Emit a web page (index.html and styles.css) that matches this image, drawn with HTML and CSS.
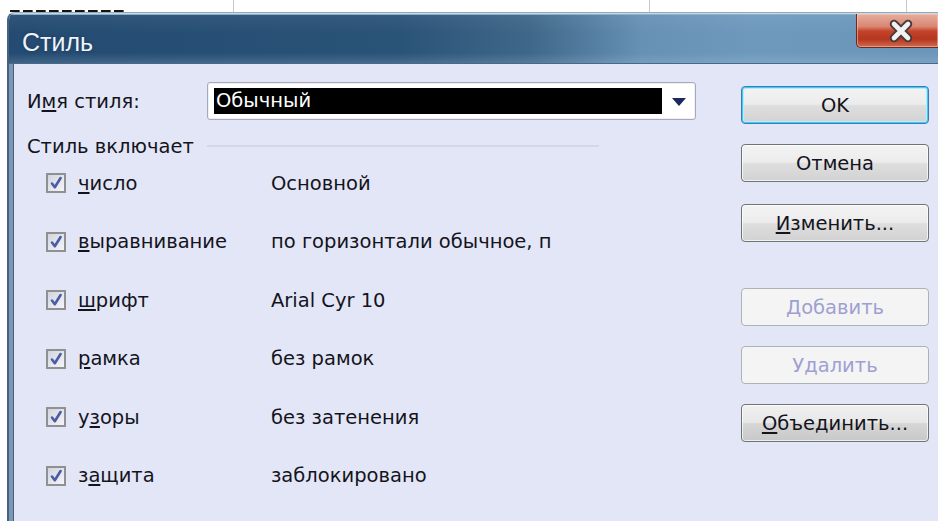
FILE: index.html
```html
<!DOCTYPE html>
<html lang="ru">
<head>
<meta charset="utf-8">
<title>Стиль</title>
<link rel="stylesheet" href="styles.css">
</head>
<body>
<svg class="defs" width="0" height="0" aria-hidden="true">
  <defs>
    <linearGradient id="cbFill" x1="0" y1="0" x2="1" y2="1">
      <stop offset="0" stop-color="#cfd3dc"/>
      <stop offset="1" stop-color="#f7f7f9"/>
    </linearGradient>
    <symbol id="cb" viewBox="0 0 20 20">
      <rect x="1" y="1" width="18" height="18" fill="url(#cbFill)" stroke="#8e9091" stroke-width="2"/>
      <path d="M6 10.5 L8.8 14.2 L14.6 5" fill="none" stroke="#4a5ca6" stroke-width="2.6" stroke-linecap="round" stroke-linejoin="round"/>
    </symbol>
  </defs>
</svg>

<div class="desk"></div>

<div class="dialog">
  <div class="titlebar">
    <span class="title">Стиль</span>
    <button class="close" type="button" aria-label="Закрыть">
      <svg width="30" height="24" viewBox="0 0 30 24">
        <path d="M8 5 L22 19 M22 5 L8 19" stroke="#4a3a3a" stroke-width="8.5" stroke-linecap="round"/>
        <path d="M8 5 L22 19 M22 5 L8 19" stroke="#f2f2f2" stroke-width="4.6" stroke-linecap="round"/>
      </svg>
    </button>
  </div>

  <div class="body">
    <div class="main">
      <div class="name-row">
        <span class="name-label">И<u>м</u>я стиля:</span>
        <div class="combo">
          <span class="combo-value">Обычный</span>
          <span class="combo-arrow">
            <svg width="14" height="8" viewBox="0 0 14 8"><path d="M0 0 H14 L7 8 Z" fill="#1b2a5c"/></svg>
          </span>
        </div>
      </div>

      <div class="group-head">
        <span>Стиль включает</span>
        <span class="rule"></span>
      </div>

      <ul class="items">
        <li class="item">
          <svg class="cb"><use href="#cb"/></svg>
          <span class="item-name"><u>ч</u>исло</span>
          <span class="item-value">Основной</span>
        </li>
        <li class="item">
          <svg class="cb"><use href="#cb"/></svg>
          <span class="item-name"><u>в</u>ыравнивание</span>
          <span class="item-value">по горизонтали обычное, п</span>
        </li>
        <li class="item">
          <svg class="cb"><use href="#cb"/></svg>
          <span class="item-name"><u>ш</u>рифт</span>
          <span class="item-value">Arial Cyr 10</span>
        </li>
        <li class="item">
          <svg class="cb"><use href="#cb"/></svg>
          <span class="item-name"><u>р</u>амка</span>
          <span class="item-value">без рамок</span>
        </li>
        <li class="item">
          <svg class="cb"><use href="#cb"/></svg>
          <span class="item-name">у<u>з</u>оры</span>
          <span class="item-value">без затенения</span>
        </li>
        <li class="item">
          <svg class="cb"><use href="#cb"/></svg>
          <span class="item-name">з<u>а</u>щита</span>
          <span class="item-value">заблокировано</span>
        </li>
      </ul>
    </div>

    <div class="actions">
      <button class="btn btn-default" type="button">OK</button>
      <button class="btn" type="button">Отмена</button>
      <button class="btn btn-edit" type="button"><u>И</u>зменить...</button>
      <button class="btn btn-add" type="button" disabled>Добавить</button>
      <button class="btn" type="button" disabled>Удалить</button>
      <button class="btn btn-merge" type="button"><u>О</u>бъединить...</button>
    </div>
  </div>
</div>
</body>
</html>
```

FILE: styles.css
```css
html, body {
  margin: 0;
  height: 100%;
  overflow: hidden;
  background: #ffffff;
}

body {
  font-family: "DejaVu Sans", "Noto Sans", sans-serif;
  font-size: 19.5px;
  color: #14141c;
}

.defs {
  position: absolute;
  width: 0;
  height: 0;
}

u {
  text-decoration-thickness: 2px;
  text-underline-offset: 2px;
}

/* sheet strip behind the dialog: grid lines and the tail of a cell */
.desk {
  height: 12px;
  background:
    repeating-linear-gradient(90deg, #141414 0 9px, #6b6b3c 9px 10px, transparent 10px 13px) 10px 10px / 117px 2px no-repeat,
    linear-gradient(#c9c9c9, #c9c9c9) 233px 0 / 1px 12px no-repeat,
    linear-gradient(#c9c9c9, #c9c9c9) 649px 0 / 1px 12px no-repeat,
    linear-gradient(#c9c9c9, #c9c9c9) 906px 0 / 1px 12px no-repeat,
    #ffffff;
}

.dialog {
  margin-left: 7px;
  height: 509px;
  display: flex;
  flex-direction: column;
  border-left: 2px solid #46627f;
  border-top: 1px solid #9aa7b5;
  border-top-left-radius: 8px;
  overflow: hidden;
}

.titlebar {
  flex: none;
  height: 50px;
  display: flex;
  align-items: flex-start;
  border-bottom: 1px solid #4a6887;
  box-shadow: inset 0 1px 0 #c5d9ec, inset 0 2px 0 #8fb0cd;
  background:
    linear-gradient(180deg, rgba(255, 255, 255, 0.06) 0%, rgba(255, 255, 255, 0) 40%, rgba(255, 255, 255, 0) 80%, rgba(190, 215, 235, 0.18) 100%),
    linear-gradient(90deg, #244b71 0%, #2a5378 42%, #3e6789 56%, #6690b4 68%, #6e99bd 80%, #6b96ba 100%);
}

.title {
  padding: 15px 0 0 13px;
  font-family: "Liberation Sans", Arial, sans-serif;
  font-size: 25px;
  line-height: 28px;
  color: #eef3f8;
  text-shadow: 0 0 3px rgba(20, 40, 70, 0.6);
}

.close {
  margin: 1px 0 0 auto;
  width: 82px;
  height: 34px;
  padding: 0 0 0 6px;
  display: flex;
  align-items: center;
  justify-content: center;
  border: 1px solid #6b2a1c;
  border-right: none;
  border-top: none;
  border-radius: 0 0 0 5px;
  background: linear-gradient(180deg, #e6ae9e 0%, #d98672 38%, #c4432a 52%, #b5371f 76%, #d06a50 100%);
  box-shadow: inset 0 0 0 1px rgba(255, 210, 195, 0.5);
}

.body {
  flex: 1;
  display: flex;
  background: #e3e6f7;
  border-left: 4px solid #7c98b4;
  box-shadow: inset 1px 0 0 #44607e;
}

.main {
  flex: 1;
  min-width: 0;
  padding: 18px 0 0 14px;
}

.name-row {
  display: flex;
  align-items: center;
  height: 38px;
}

.name-label {
  width: 180px;
}

.combo {
  box-sizing: border-box;
  width: 489px;
  height: 38px;
  display: flex;
  align-items: center;
  padding-left: 6px;
  border: 1px solid #a7aab3;
  border-radius: 3px;
  background: #ffffff;
  box-shadow: inset 0 0 0 1px #eef0f4;
}

.combo-value {
  width: 446px;
  height: 26px;
  padding-left: 2px;
  line-height: 26px;
  background: #000000;
  color: #ffffff;
}

.combo-arrow {
  flex: 1;
  display: flex;
  justify-content: center;
  padding-top: 1px;
}

.group-head {
  width: 572px;
  height: 24px;
  margin-top: 14px;
  display: flex;
  align-items: center;
}

.rule {
  flex: 1;
  height: 2px;
  margin-left: 13px;
  background: #d1d9e7;
}

.items {
  list-style: none;
  margin: 8px 0 0;
  padding: 0;
  display: flex;
  flex-direction: column;
  gap: 24.6px;
}

.item {
  height: 34px;
  display: flex;
  align-items: center;
}

.cb {
  flex: none;
  width: 20px;
  height: 20px;
  margin-left: 19px;
}

.item-name {
  width: 193px;
  margin-left: 12px;
}

.actions {
  flex: none;
  width: 188px;
  margin-right: 9px;
  padding-top: 22px;
  display: flex;
  flex-direction: column;
  gap: 20px;
}

.btn {
  box-sizing: border-box;
  height: 38px;
  padding: 0;
  border: 1px solid #707376;
  border-radius: 4px;
  font-family: inherit;
  font-size: 19.5px;
  color: #14141c;
  background: linear-gradient(180deg, #f3f3f3 0%, #ececec 48%, #dedede 52%, #d2d2d2 100%);
  box-shadow: inset 0 0 0 1px rgba(255, 255, 255, 0.7);
}

.btn-default {
  border-color: #3b7db0;
  box-shadow: inset 0 0 0 1px #43c9f6, inset 0 0 0 2px #b7ecfc;
}

.btn-edit {
  margin-top: 2px;
}

.btn-add {
  margin-top: 26px;
}

.btn:disabled {
  border-color: #aeb2b6;
  background: #f4f4f5;
  color: #9ea0d2;
  box-shadow: none;
}

.btn-merge {
  background: linear-gradient(180deg, #f0f0f0 0%, #e8e8e8 48%, #d6d6d6 52%, #c8c8c8 100%);
}
```
